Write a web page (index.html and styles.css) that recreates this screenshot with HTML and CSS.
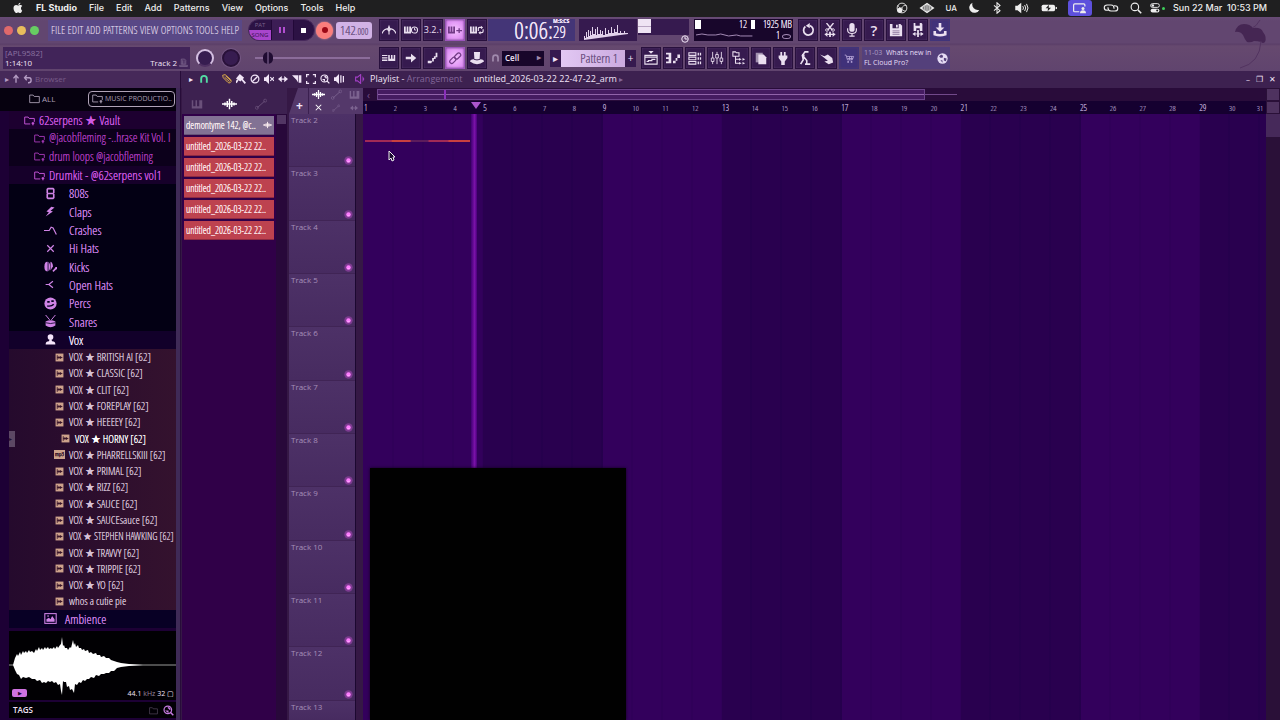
FILE: index.html
```
<!DOCTYPE html>
<html lang="en">
<head>
    <meta charset="UTF-8">
    <meta name="viewport" content="width=device-width, initial-scale=1.0">
    <title>FL Studio</title>
    <link rel="stylesheet" href="styles.css">
</head>
<body>
    <!-- Icon sprite -->
    <svg class="sprite" aria-hidden="true">
        <symbol id="i-apple" viewBox="0 0 16 16"><path d="M11.2 1c.1 1.500-1.200 3-2.800 3C8.300 2.500 9.700 1.200 11.200 1zM13.500 11.500c-.8 1.800-1.700 3.200-2.900 3.200-.9 0-1.200-.6-2.300-.6s-1.500.6-2.300.6C4 14.700 2 10.800 2 8c0-2.600 1.700-4 3.400-4 1.100 0 2 .8 2.700.8.700 0 1.800-.8 3.200-.8.700 0 1.800.3 2.400 1.400-2.500 1.400-2 5 .0 6.100z"/></symbol>
        <symbol id="i-ball" viewBox="0 0 16 16"><g fill="none" stroke="currentColor"><circle cx="8" cy="8" r="6.500" stroke-width="1.200"/><path d="M8 8c1-3 3-4 6-3M8 8c-3 0-5-1-5.500-4M8 8c0 3 2 4 5 4"/></g><circle cx="5" cy="11" r="3.500"/></symbol>
        <symbol id="i-diamond" viewBox="0 0 20 16"><path d="M10 1l10 7-10 7L0 8z"/><path d="M5 6v4M7.500 4.500v7M10 3.500v9M12.500 4.500v7M15 6v4" stroke="#1f1f20"/></symbol>
        <symbol id="i-moon" viewBox="0 0 16 16"><path d="M6 1a7 7 0 1 0 9 9.500A7.500 7.500 0 0 1 6 1z"/></symbol>
        <symbol id="i-bt" viewBox="0 0 16 16"><path d="M4 4.500l8 7L8 15V1l4 3.500-8 7" fill="none" stroke="currentColor" stroke-width="1.400"/></symbol>
        <symbol id="i-volume" viewBox="0 0 20 16"><path d="M1 5h3l5-4v14l-5-4H1z"/><path d="M11 5.500q2 2.500 0 5M13.500 4q3 4 0 8M16 2.500q4 5.500 0 11" fill="none" stroke="currentColor" stroke-width="1.300"/></symbol>
        <symbol id="i-battery" viewBox="0 0 24 16"><rect x="1" y="3" width="20" height="10" rx="2.500"/><path d="M22 6v4l2-1V7z"/><path d="M12 3L7 8.500h3.500L10 13l5-5.500h-3.500z" fill="#1f1f20"/></symbol>
        <symbol id="i-share" viewBox="0 0 20 16"><path d="M9 13H3q-1.500 0-1.500-1.500V4Q1.500 2.500 3 2.500h12q1.500 0 1.500 1.500v2" fill="none" stroke="currentColor" stroke-width="1.600"/><circle cx="14" cy="8.500" r="2"/><path d="M10 15q0-4 4-4t4 4z"/></symbol>
        <symbol id="i-rings" viewBox="0 0 20 16"><g fill="none" stroke="currentColor" stroke-width="1.500"><path d="M14 9V8q0-4-4-4H5Q1 4 1 7.500T5 11h1"/><path d="M6 7v1q0 4 4 4h5q4 0 4-3.500T15 5h-1"/></g></symbol>
        <symbol id="i-search" viewBox="0 0 16 16"><path d="M10.500 10.500L15 15" stroke="currentColor" stroke-width="2"/><circle cx="6.500" cy="6.500" r="5" fill="none" stroke="currentColor" stroke-width="1.500"/></symbol>
        <symbol id="i-control" viewBox="0 0 16 16"><rect x="1" y="1" width="14" height="6" rx="3" fill="none" stroke="currentColor" stroke-width="1.500"/><circle cx="4.500" cy="4" r="2"/><rect x="1" y="9" width="14" height="6" rx="3"/><circle cx="11.500" cy="12" r="1.600" fill="#1f1f20"/></symbol>

        <symbol id="i-metronome" viewBox="0 0 16 16"><path d="M0 12Q2 6.500 8 6.500T16 12M8 6v7" fill="none" stroke="currentColor" stroke-width="1.300"/><path d="M8 2l1.500 4h-3zM5 7l3 3 3-3z"/></symbol>
        <symbol id="i-wait" viewBox="0 0 16 16"><path d="M0 4h2v6h1V4h2v6h1V4h2v8H0z"/><circle cx="12" cy="8" r="3.500" fill="#361a4f" stroke="currentColor" stroke-width="1.200"/><path d="M12 5.500V8h2" stroke="currentColor" fill="none"/></symbol>
        <symbol id="i-keysplus" viewBox="0 0 16 16"><path d="M0 4h2v6h1V4h2v6h1V4h2v8H0zM12 6h1.500v2H16v1.500h-2.500v2H12v-2H9.500V8H12z"/></symbol>
        <symbol id="i-loop" viewBox="0 0 16 16"><path d="M0 4h2v6h1V4h2v6h1V4h2v8H0z"/><path d="M9.500 9V6.500Q9.500 5 11 5h2M15 7v2.500q0 1.500-1.500 1.500h-2" fill="none" stroke="currentColor" stroke-width="1.300"/><path d="M12.500 3l2.500 2-2.500 2zM12 9l-2.500 2 2.500 2z"/></symbol>
        <symbol id="i-keyboard" viewBox="0 0 18 16"><path d="M0 4h7v1.500H0zM0 7h7v1.500H0zM0 10h7v2H0zM8 4h2v5h1.500V4h2v5H15V4h2v8H8z"/></symbol>
        <symbol id="i-arrow" viewBox="0 0 16 16"><path d="M2 6.500h6V3l6 5-6 5V9.500H2z"/></symbol>
        <symbol id="i-slide" viewBox="0 0 16 16"><path d="M2 11h4l1 1-1 2H2zM7 8h2v4H7zM9 6h2v3H9zM11 2h2v5h-2z"/></symbol>
        <symbol id="i-link" viewBox="0 0 16 16"><g fill="none" stroke="currentColor" stroke-width="1.400"><rect x="7" y="3.500" width="8" height="4.500" rx="2.200" transform="rotate(-45 11 5.700)"/><rect x="1.500" y="8.500" width="8" height="4.500" rx="2.200" transform="rotate(-45 5.500 10.700)"/></g></symbol>
        <symbol id="i-hat" viewBox="0 0 16 16"><path d="M4.500 1h7L11 9H5z"/><path d="M0 12q0-2 4-2.500h8q4 .5 4 2.500-4 3-8 3t-8-3z"/><path d="M4.500 9.500q3.500 1.500 7 0" stroke="#361a4f" fill="none"/></symbol>
        <symbol id="i-magnet" viewBox="0 0 16 16"><path d="M3.500 14V7.500a4.500 4.500 0 0 1 9 0V14M2 11.500h3M11 11.500h3" fill="none" stroke="currentColor" stroke-width="3"/></symbol>
        <symbol id="i-playlist" viewBox="0 0 16 16"><path d="M5 0h6L8 3z"/><path d="M1 5h14v10H1zM1 7h14" fill="none" stroke="currentColor" stroke-width="1.300"/><path d="M3 12h2v-1h4V9.500h4" fill="none" stroke="currentColor" stroke-width="1.300"/></symbol>
        <symbol id="i-roll" viewBox="0 0 16 16"><path d="M0 2h6v12H0v-2h3V9H0V7h3V4H0zM8 11h3v3H8zM11 8h2v3h-2zM13 4h3v4h-3z"/></symbol>
        <symbol id="i-rack" viewBox="0 0 16 16"><g fill="none" stroke="currentColor" stroke-width="1.200"><path d="M1 2h8v3H1zM1 7h8v3H1zM1 12h8v3H1z"/><path d="M11 3.500h4M11 8.500h4M11 13.500h4" stroke-width="3" stroke-dasharray="1.500 1"/></g></symbol>
        <symbol id="i-mixer" viewBox="0 0 16 16"><path d="M3 1v14M8 1v14M13 1v14" stroke="currentColor"/><path d="M1.500 8h3v4h-3zM6.500 4h3v4h-3zM11.500 8h3v4h-3z" fill="#361a4f" stroke="currentColor"/></symbol>
        <symbol id="i-tree" viewBox="0 0 16 16"><path d="M1 1h3l1 1h3v4H1zM4 6v8h4M4 9.500h4" fill="none" stroke="currentColor" stroke-width="1.200"/><path d="M8 8l3 1.500L8 11zM12 8l3 1.500-3 1.500zM8 12.500l3 1.500-3 1.500zM12 12.500l3 1.500-3 1.500z"/></symbol>
        <symbol id="i-paste" viewBox="0 0 16 16"><path d="M2 2h8v11H2z" opacity=".6"/><path d="M5 4h6l3 3v8H5z"/></symbol>
        <symbol id="i-plug" viewBox="0 0 16 16"><path d="M5 1h2v4h2V1h2v4h2v3l-3 4v4H6v-4L3 8V5h2z"/></symbol>
        <symbol id="i-digger" viewBox="0 0 16 16"><circle cx="6" cy="5" r="1.500"/><path d="M12 1H8L5 5l1 5-3 5M6 6l4 5v4M8 15h6" fill="none" stroke="currentColor" stroke-width="1.800"/></symbol>
        <symbol id="i-tap" viewBox="0 0 16 16"><path d="M0 4l5 2 4-2 5 4 1 5-5 2-5-3 4-1z"/></symbol>
        <symbol id="i-cart" viewBox="0 0 16 16"><path d="M1 3h2l2 7h7l2-5H4M5 8h8M8 5v5M11 5v5" fill="none" stroke="currentColor" stroke-width="1.200"/><circle cx="6" cy="13" r="1.300"/><circle cx="11" cy="13" r="1.300"/></symbol>
        <symbol id="i-undo" viewBox="0 0 16 16"><path d="M5 4a5.500 5.500 0 1 0 5-1" fill="none" stroke="currentColor" stroke-width="2"/><path d="M10 0v6L5.500 3z"/></symbol>
        <symbol id="i-cut" viewBox="0 0 16 16"><path d="M4 0l6.500 8M12 0L5.500 8M2 13h12" stroke="currentColor" stroke-width="1.500"/><circle cx="4.500" cy="8" r="1.500" fill="none" stroke="currentColor"/><circle cx="11.500" cy="8" r="1.500" fill="none" stroke="currentColor"/><path d="M5 10v6l-3-3zM11 10v6l3-3zM7 10h2v6H7z"/></symbol>
        <symbol id="i-mic" viewBox="0 0 16 16"><rect x="5" y="0" width="6" height="10" rx="3"/><path d="M3 6v2q0 4 5 4t5-4V6M8 12v3M5 15h6" fill="none" stroke="currentColor" stroke-width="1.300"/></symbol>
        <symbol id="i-save" viewBox="0 0 16 16"><path d="M1 1h12l2 2v12H1z"/><path d="M4 1h7v5H4z" fill="#361a4f"/><path d="M8 2h2v3H8z"/><path d="M4 9h8M4 11h8M4 13h8" stroke="#8c759c"/></symbol>
        <symbol id="i-saveas" viewBox="0 0 16 16"><path d="M3 0h9l1 1v8H3z"/><path d="M5 0h5v3H5zM6 6h4v3H6z" fill="#361a4f"/><path d="M7 8h2v8H7zM5 10v5l-3-2.500zM11 10v5l3-2.500z"/><path d="M2 12.500h12" stroke="currentColor"/></symbol>
        <symbol id="i-export" viewBox="0 0 16 16"><path d="M6.500 0h3v5H13L8 10 3 5h3.500z"/><path d="M2 9v4q6 2 12 0V9" fill="none" stroke="currentColor" stroke-width="3"/></symbol>
        <symbol id="i-globe" viewBox="0 0 16 16"><circle cx="8" cy="8" r="7.500"/><path d="M6 2l3 2-1 3H5L3 5zM10 7l4 1-1 4-3-1zM5 10l3 1v3z" fill="#54407b"/></symbol>
        <symbol id="i-clock" viewBox="0 0 16 16"><circle cx="8" cy="8" r="6.500" fill="none" stroke="currentColor" stroke-width="2"/><path d="M8 3v5h5" fill="none" stroke="currentColor" stroke-width="2"/></symbol>

        <symbol id="i-pencil" viewBox="0 0 16 16"><path d="M1 2l4-1 9 8q2 3-1 5-2 1-4-1L2 6zM4 5l8 7M6 3l8 8" fill="none" stroke="currentColor" stroke-width="1.600"/></symbol>
        <symbol id="i-brush" viewBox="0 0 16 16"><path d="M6 0l7 6-6 6-7-5z"/><path d="M9 8l6 7M3 9l-3 5" stroke="currentColor" stroke-width="3"/></symbol>
        <symbol id="i-no" viewBox="0 0 16 16"><path d="M3.500 12.500l9-9" stroke="currentColor" stroke-width="2"/><circle cx="8" cy="8" r="6.200" fill="none" stroke="currentColor" stroke-width="2"/></symbol>
        <symbol id="i-mute" viewBox="0 0 16 16"><path d="M0 5h3l5-5v16l-5-5H0z"/><path d="M10 5l6 6M16 5l-6 6" stroke="currentColor" stroke-width="1.800"/></symbol>
        <symbol id="i-slip" viewBox="0 0 16 16"><path d="M0 8l6-5v4h4V3l6 5-6 5V9H6v4z"/></symbol>
        <symbol id="i-slice" viewBox="0 0 16 16"><path d="M0 2h10v12L7 9zM11 2h4v12h-4z"/></symbol>
        <symbol id="i-select" viewBox="0 0 16 16"><path d="M1 5V1h4M11 1h4v4M15 11v4h-4M5 15H1v-4" fill="none" stroke="currentColor" stroke-width="2"/></symbol>
        <symbol id="i-zoom" viewBox="0 0 16 16"><circle cx="7" cy="7" r="5.500" fill="none" stroke="currentColor" stroke-width="1.800"/><path d="M11 11l4 4M7 4q3 0 3 3" fill="none" stroke="currentColor" stroke-width="2.200"/><path d="M3 8h5v4z"/></symbol>
        <symbol id="i-speaker" viewBox="0 0 16 16"><path d="M0 5h3l5-5v16l-5-5H0zM10 2h2v12h-2zM14 3h2v10h-2z"/></symbol>
        <symbol id="i-horn" viewBox="0 0 16 16"><path d="M1 5h3l5-4v14l-5-4H1z" fill="none" stroke="currentColor" stroke-width="1.800"/><path d="M12 3l3 5-3 5z"/></symbol>
        <symbol id="i-wave" viewBox="0 0 20 16"><path d="M0 8h20M4 6v4M7 4v8M10 1v14M13 4v8M16 6v4" stroke="currentColor" stroke-width="2"/></symbol>
        <symbol id="i-auto" viewBox="0 0 16 16"><path d="M3 13L13 4" stroke="currentColor" stroke-width="1.300"/><circle cx="2.500" cy="13" r="2" fill="none" stroke="currentColor"/><circle cx="13.500" cy="3.500" r="2" fill="none" stroke="currentColor"/></symbol>
        <symbol id="i-keys" viewBox="0 0 16 16"><path d="M1 3h2v8h3V3h2v8h3V3h4v11H1z"/></symbol>
        <symbol id="i-up" viewBox="0 0 16 16"><path d="M8 14V4M4 7l4-5 4 5" fill="none" stroke="currentColor" stroke-width="2.200"/></symbol>
        <symbol id="i-back" viewBox="0 0 16 16"><path d="M3 6h7q3 0 3 4t-4 4H8M6 2L2.500 6 6 10" fill="none" stroke="currentColor" stroke-width="2.200"/></symbol>

        <symbol id="i-folder" viewBox="0 0 16 16"><path d="M1 3h5l1.500 2H15v9H1z" fill="none" stroke="currentColor" stroke-width="1.300"/></symbol>
        <symbol id="i-folderplus" viewBox="0 0 16 16"><path d="M9 13H1V3h5l1.500 2H15v5" fill="none" stroke="currentColor" stroke-width="1.300"/><path d="M11 12h4M13 10v5" stroke="currentColor" stroke-width="1.800"/></symbol>
        <symbol id="i-808" viewBox="0 0 16 16"><path d="M5 2h6l1 1v4l-1 1H5L4 7V3zM5 8h6l1 1v4l-1 1H5l-1-1V9z" fill="none" stroke="currentColor" stroke-width="2"/></symbol>
        <symbol id="i-clap" viewBox="0 0 16 16"><path d="M9 2L3 8l3 1-4 5 9-6-3-1 5-4z"/></symbol>
        <symbol id="i-crash" viewBox="0 0 20 16"><path d="M0 8h8l3-5 3 1 5 10" fill="none" stroke="currentColor" stroke-width="1.800"/></symbol>
        <symbol id="i-cross" viewBox="0 0 16 16"><path d="M4 4l8 8M12 4l-8 8" stroke="currentColor" stroke-width="1.500"/></symbol>
        <symbol id="i-kick" viewBox="0 0 16 16"><ellipse cx="4" cy="8" rx="3.500" ry="6"/><path d="M8 2q3 1 3 6l-3 5z"/><path d="M5 1v14" stroke="#050020"/><path d="M11 14l4-4" stroke="currentColor" stroke-width="2"/><circle cx="15" cy="10" r="1.500"/></symbol>
        <symbol id="i-openhat" viewBox="0 0 16 16"><path d="M2 8h4l5-4M6 8l5 4" fill="none" stroke="currentColor" stroke-width="1.500"/></symbol>
        <symbol id="i-perc" viewBox="0 0 16 16"><circle cx="8" cy="8" r="7.500"/><path d="M4 5h3v2H4zM9 4h3v2H9z" fill="#050020"/><path d="M4 11q5 1 8-2" stroke="#050020" stroke-width="1.800" fill="none"/></symbol>
        <symbol id="i-snare" viewBox="0 0 16 16"><path d="M2 0l5 6M14 0L9 6" stroke="currentColor" stroke-width="1.200"/><path d="M2 8q6-3 12 0v5q-6 4-12 0z"/><path d="M2 9.500q6 2 12 0" stroke="#050020" fill="none"/></symbol>
        <symbol id="i-vox" viewBox="0 0 16 16"><circle cx="8" cy="5" r="3.500"/><path d="M7 8h2l1 2q4 0 4 4H2q0-4 4-4z"/></symbol>
        <symbol id="i-picture" viewBox="0 0 16 16"><rect x="1" y="2" width="14" height="12" fill="none" stroke="currentColor" stroke-width="1.300"/><path d="M3 12V9l3-2 2 2 2-4 3 4v3z"/><circle cx="5" cy="5" r="1"/></symbol>
        <symbol id="i-sample" viewBox="0 0 16 16"><path d="M1 1h14v14H1z"/><path d="M4 4v8M4 8h9M7 5.500v5M10 5.500v5" stroke="#331027" stroke-width="1.600"/></symbol>
        <symbol id="i-knob" viewBox="0 0 16 16"><circle cx="8" cy="8" r="7.500" fill="#b14ac0" opacity=".5"/><circle cx="8" cy="8" r="4" fill="#ff7cff"/><path d="M6 10h4" stroke="#ffd4ff"/></symbol>
        <symbol id="i-robot" viewBox="0 0 16 16"><path d="M4 2h6l2 2v7H4zM1 13h14v2H1zM6 4v7M9 4v7" fill="none" stroke="currentColor" stroke-width="1.500"/></symbol>
    </svg>

    <!-- macOS menu bar -->
    <header class="macbar">
        <nav class="mac-menu">
            <svg class="apple"><use href="#i-apple"/></svg>
            <button class="app-name">FL Studio</button>
            <button>File</button><button>Edit</button><button>Add</button><button>Patterns</button>
            <button>View</button><button>Options</button><button>Tools</button><button>Help</button>
        </nav>
        <div class="mac-status">
            <svg><use href="#i-ball"/></svg>
            <svg class="wide"><use href="#i-diamond"/></svg>
            <span class="ua">UA</span>
            <svg><use href="#i-moon"/></svg>
            <svg><use href="#i-bt"/></svg>
            <svg class="wide"><use href="#i-volume"/></svg>
            <svg class="wide"><use href="#i-battery"/></svg>
            <span class="sharing"><svg class="wide"><use href="#i-share"/></svg></span>
            <svg class="wide"><use href="#i-rings"/></svg>
            <svg><use href="#i-search"/></svg>
            <span class="control"><svg><use href="#i-control"/></svg><i class="cam-dot"></i></span>
            <time>Sun 22 Mar&nbsp; 10:53 PM</time>
        </div>
    </header>

    <!-- Main toolbar -->
    <section class="toolbar">
        <div class="bar-left">
            <div class="row">
                <div class="lights"><i class="red"></i><i class="yellow"></i><i class="green"></i></div>
                <nav class="fl-menu">
                    <button>FILE</button><button>EDIT</button><button>ADD</button><button>PATTERNS</button>
                    <button>VIEW</button><button>OPTIONS</button><button>TOOLS</button><button>HELP</button>
                </nav>
                <div class="transport">
                    <div class="mode"><button>PAT</button><button class="on">SONG</button></div>
                    <button class="pause" aria-label="Pause"><i></i><i></i></button>
                    <button class="stop" aria-label="Stop"><i></i></button>
                </div>
                <button class="record" aria-label="Record"><i></i></button>
                <output class="tempo">142<small>.000</small></output>
            </div>
            <div class="row">
                <div class="hint">
                    <span class="dim">[APL9582]</span>
                    <div><span>1:14:10</span><span>Track 2 <svg><use href="#i-robot"/></svg></span></div>
                </div>
                <button class="dial main-vol" aria-label="Main volume"></button>
                <button class="dial main-pitch" aria-label="Main pitch"></button>
                <input class="pitch-slider" type="range" min="0" max="100" value="8" aria-label="Song position">
            </div>
        </div>

        <div class="bar-mid">
            <div class="row">
                <div class="tools">
                    <button aria-label="Metronome"><svg><use href="#i-metronome"/></svg></button>
                    <button aria-label="Wait for input"><svg><use href="#i-wait"/></svg></button>
                    <button class="count">3.2.<small>1</small></button>
                    <button class="lit" aria-label="Overdub"><svg><use href="#i-keysplus"/></svg></button>
                    <button aria-label="Loop record"><svg><use href="#i-loop"/></svg></button>
                </div>
                <div class="clock"><span class="min">0:06:</span><span class="sec"><small>M:S:CS</small>29</span></div>
                <svg class="scope" viewBox="0 0 58 22" aria-hidden="true"><path d="M5 21v-4h1v2h1v-6h1v5h1v-7h1v6h1v-5h1v4h1v-8h1v7h2v-5h1v6h1v-8h1v7h2v-4h1v4h1v-3h1v4h2v-7h1v6h2v-4h1v3h2v-6h1v6h2v-4h1v3h2v-7h1v8h2v-2h1v2h3v-2h1v2h3v1z"/></svg>
                <div class="peak"><i></i><svg><use href="#i-clock"/></svg></div>
            </div>
            <div class="row">
                <div class="tools">
                    <button aria-label="Typing keyboard"><svg><use href="#i-keyboard"/></svg></button>
                    <button aria-label="Step"><svg><use href="#i-arrow"/></svg></button>
                    <button aria-label="Slide"><svg><use href="#i-slide"/></svg></button>
                    <button class="lit" aria-label="Link"><svg><use href="#i-link"/></svg></button>
                    <button aria-label="Wizard"><svg><use href="#i-hat"/></svg></button>
                </div>
                <svg class="snap-icon"><use href="#i-magnet"/></svg>
                <div class="snap"><select aria-label="Snap"><option>Cell</option></select></div>
                <div class="pattern">
                    <button aria-label="Pattern list">▸</button>
                    <input type="text" value="Pattern 1" aria-label="Pattern name">
                    <button aria-label="Add pattern">+</button>
                </div>
            </div>
        </div>

        <div class="bar-right">
            <div class="row">
                <div class="monitor">
                    <div class="monitor-top"><i></i><span class="cpu">12</span><i class="thin"></i><span class="mem">1925 MB</span></div>
                    <svg class="trace" viewBox="0 0 98 8" aria-hidden="true"><path d="M1 6l6-1 6 1h8l5-1 8 2 8-1 4 1h12" fill="none" stroke="#a48bb5"/></svg>
                    <span class="poly">1 <i></i></span>
                </div>
                <div class="tools">
                    <button aria-label="Undo"><svg><use href="#i-undo"/></svg></button>
                    <button aria-label="Cut"><svg><use href="#i-cut"/></svg></button>
                    <button aria-label="Record audio"><svg><use href="#i-mic"/></svg></button>
                    <button class="help">?</button>
                    <button aria-label="Save"><svg><use href="#i-save"/></svg></button>
                    <button aria-label="Save as"><svg><use href="#i-saveas"/></svg></button>
                    <button class="blue" aria-label="Export"><svg><use href="#i-export"/></svg></button>
                </div>
            </div>
            <div class="row">
                <div class="tools">
                    <button aria-label="Playlist"><svg><use href="#i-playlist"/></svg></button>
                    <button aria-label="Piano roll"><svg><use href="#i-roll"/></svg></button>
                    <button aria-label="Channel rack"><svg><use href="#i-rack"/></svg></button>
                    <button aria-label="Mixer"><svg><use href="#i-mixer"/></svg></button>
                    <button aria-label="Browser"><svg><use href="#i-tree"/></svg></button>
                    <button aria-label="Project picker"><svg><use href="#i-paste"/></svg></button>
                    <button aria-label="Plugins"><svg><use href="#i-plug"/></svg></button>
                    <button aria-label="Tools"><svg><use href="#i-digger"/></svg></button>
                    <button aria-label="Touch"><svg><use href="#i-tap"/></svg></button>
                    <button class="blue shop" aria-label="Shop"><svg><use href="#i-cart"/></svg></button>
                </div>
                <a class="news" href="#"><span><em>11-03</em>&nbsp; What's new in<br>FL Cloud Pro?</span><svg><use href="#i-globe"/></svg></a>
            </div>
        </div>

        <div class="bar-rest">
            <svg class="fruit" viewBox="0 0 34 52" aria-hidden="true"><path d="M2 13Q4 5 11 5q6 0 9 4 8-1 10 4 4 5 2 10-2 2-4 0-3-1-7-1-3 2-7 1-2-2-4-7-3-4-8-3z" fill="#452653"/><path d="M19 9q4-1 8-8M28 22q-1 22-21 27" fill="none" stroke="#523360"/></svg>
        </div>
    </section>

    <main class="workspace">
        <!-- Browser -->
        <aside class="browser">
            <div class="panel-head browser-head">
                <span class="tri">▸</span>
                <svg><use href="#i-up"/></svg>
                <svg><use href="#i-back"/></svg>
                <span class="dim">Browser</span>
            </div>
            <div class="browser-body">
                <div class="browser-tabs">
                    <button><svg><use href="#i-folder"/></svg>ALL</button>
                    <button class="active"><svg><use href="#i-folderplus"/></svg>MUSIC PRODUCTIO..</button>
                </div>
                <ul class="tree">
                    <li class="root"><svg><use href="#i-folderplus"/></svg>62serpens ★ Vault</li>
                    <li class="folder dark"><svg><use href="#i-folderplus"/></svg>@jacobfleming -..hrase Kit Vol. I</li>
                    <li class="folder dark"><svg><use href="#i-folderplus"/></svg>drum loops @jacobfleming</li>
                    <li class="folder"><svg><use href="#i-folderplus"/></svg>Drumkit - @62serpens vol1</li>
                    <li class="kit"><svg><use href="#i-808"/></svg>808s</li>
                    <li class="kit"><svg><use href="#i-clap"/></svg>Claps</li>
                    <li class="kit"><svg><use href="#i-crash"/></svg>Crashes</li>
                    <li class="kit"><svg><use href="#i-cross"/></svg>Hi Hats</li>
                    <li class="kit"><svg><use href="#i-kick"/></svg>Kicks</li>
                    <li class="kit"><svg><use href="#i-openhat"/></svg>Open Hats</li>
                    <li class="kit"><svg><use href="#i-perc"/></svg>Percs</li>
                    <li class="kit"><svg><use href="#i-snare"/></svg>Snares</li>
                    <li class="kit open"><svg><use href="#i-vox"/></svg>Vox</li>
                    <li class="file"><svg><use href="#i-sample"/></svg>VOX ★ BRITISH AI [62]</li>
                    <li class="file"><svg><use href="#i-sample"/></svg>VOX ★ CLASSIC [62]</li>
                    <li class="file"><svg><use href="#i-sample"/></svg>VOX ★ CLIT [62]</li>
                    <li class="file"><svg><use href="#i-sample"/></svg>VOX ★ FOREPLAY [62]</li>
                    <li class="file"><svg><use href="#i-sample"/></svg>VOX ★ HEEEEY [62]</li>
                    <li class="file selected"><svg><use href="#i-sample"/></svg>VOX ★ HORNY [62]</li>
                    <li class="file"><b class="mp3">mp3</b>VOX ★ PHARRELLSKIII [62]</li>
                    <li class="file"><svg><use href="#i-sample"/></svg>VOX ★ PRIMAL [62]</li>
                    <li class="file"><svg><use href="#i-sample"/></svg>VOX ★ RIZZ [62]</li>
                    <li class="file"><svg><use href="#i-sample"/></svg>VOX ★ SAUCE [62]</li>
                    <li class="file"><svg><use href="#i-sample"/></svg>VOX ★ SAUCEsauce [62]</li>
                    <li class="file long"><svg><use href="#i-sample"/></svg>VOX ★ STEPHEN HAWKING [62]</li>
                    <li class="file"><svg><use href="#i-sample"/></svg>VOX ★ TRAVVY [62]</li>
                    <li class="file"><svg><use href="#i-sample"/></svg>VOX ★ TRIPPIE [62]</li>
                    <li class="file"><svg><use href="#i-sample"/></svg>VOX ★ YO [62]</li>
                    <li class="file"><svg><use href="#i-sample"/></svg>whos a cutie pie</li>
                    <li class="kit ambience"><svg><use href="#i-picture"/></svg>Ambience</li>
                </ul>
                <div class="preview">
                    <svg class="waveform" viewBox="0 0 167 68" preserveAspectRatio="none" aria-hidden="true">
                        <path d="M0 34h167" stroke="#999"/>
                        <path fill="#fff" d="M4 34L6 27 8 23 9 25 11 21 12 24 14 20 15 22 17 20 18 22 20 19 21 21 23 20 25 22 27 18 28 20 30 16 31 19 33 17 34 19 36 16 37 18 39 16 40 18 42 17 43 18 45 16 46 18 48 15 49 17 51 14 52 13 53 6 54 15 55 14 56 17 58 17 59 19 61 16 62 17 64 9 65 14 66 12 67 16 69 14 70 17 72 17 73 19 75 18 76 20 79 19 80 22 82 21 84 23 87 22 88 24 91 24 92 26 95 25 97 27 100 27 102 29 105 30 108 31 112 32 120 33 134 34 120 35 112 36 108 37 105 40 102 40 100 42 97 42 95 43 92 43 90 45 87 44 85 47 82 46 80 48 78 48 76 50 74 49 72 52 70 51 68 54 66 53 65 62 63 58 61 59 60 55 58 56 57 51 55 51 54 50 53 64 52 60 51 53 49 54 47 51 45 52 43 50 41 51 39 50 37 52 35 51 33 52 31 49 28 50 26 48 23 48 20 46 17 47 14 46 12 48 10 44 8 43 6 39z"/>
                    </svg>
                    <button class="play" aria-label="Play sample">▶</button>
                    <span class="rate">44.1 <em>kHz</em> 32 ▢</span>
                </div>
                <div class="tags"><span>TAGS</span><svg class="dim"><use href="#i-folder"/></svg><svg class="find"><use href="#i-zoom"/></svg></div>
                <span class="grip">▸</span>
            </div>
        </aside>

        <!-- Playlist window -->
        <section class="playlist">
            <div class="panel-head playlist-head">
                <span class="tri">▸</span>
                <svg class="green"><use href="#i-magnet"/></svg>
                <div class="head-tools">
                    <svg class="gold"><use href="#i-pencil"/></svg>
                    <svg><use href="#i-brush"/></svg>
                    <svg><use href="#i-no"/></svg>
                    <svg><use href="#i-mute"/></svg>
                    <svg><use href="#i-slip"/></svg>
                    <svg><use href="#i-slice"/></svg>
                    <svg><use href="#i-select"/></svg>
                    <svg><use href="#i-zoom"/></svg>
                    <svg><use href="#i-speaker"/></svg>
                </div>
                <svg class="violet"><use href="#i-horn"/></svg>
                <h1>Playlist - <em>Arrangement</em></h1>
                <span class="project">untitled_2026-03-22 22-47-22_arm <small>▸</small></span>
                <div class="win-buttons">
                    <button aria-label="Minimize">–</button>
                    <button aria-label="Restore">❐</button>
                    <button aria-label="Close">✕</button>
                </div>
            </div>
            <div class="playlist-body">
                <div class="picker">
                    <div class="picker-tabs">
                        <svg><use href="#i-keys"/></svg>
                        <svg class="on"><use href="#i-wave"/></svg>
                        <svg><use href="#i-auto"/></svg>
                    </div>
                    <div class="picker-main">
                        <ul class="clips">
                            <li class="grey"><span>demontyme 142, @c..</span><svg><use href="#i-wave"/></svg></li>
                            <li>untitled_2026-03-22 22..</li>
                            <li>untitled_2026-03-22 22..</li>
                            <li>untitled_2026-03-22 22..</li>
                            <li>untitled_2026-03-22 22..</li>
                            <li>untitled_2026-03-22 22..</li>
                        </ul>
                        <div class="picker-scroll"><i></i></div>
                    </div>
                </div>

                <div class="tracks">
                    <div class="corner">
                        <button class="add" aria-label="Add track">+</button>
                        <div class="filters">
                            <svg class="on"><use href="#i-wave"/></svg><svg><use href="#i-auto"/></svg><svg><use href="#i-keys"/></svg>
                            <svg class="on"><use href="#i-cross"/></svg><svg class="off"><use href="#i-auto"/></svg><svg class="off"><use href="#i-slip"/></svg>
                        </div>
                    </div>
                    <ul class="track-list">
                        <li>Track 2<svg><use href="#i-knob"/></svg></li>
                        <li>Track 3<svg><use href="#i-knob"/></svg></li>
                        <li>Track 4<svg><use href="#i-knob"/></svg></li>
                        <li>Track 5<svg><use href="#i-knob"/></svg></li>
                        <li>Track 6<svg><use href="#i-knob"/></svg></li>
                        <li>Track 7<svg><use href="#i-knob"/></svg></li>
                        <li>Track 8<svg><use href="#i-knob"/></svg></li>
                        <li>Track 9<svg><use href="#i-knob"/></svg></li>
                        <li>Track 10<svg><use href="#i-knob"/></svg></li>
                        <li>Track 11<svg><use href="#i-knob"/></svg></li>
                        <li>Track 12<svg><use href="#i-knob"/></svg></li>
                        <li class="part">Track 13</li>
                    </ul>
                </div>

                <div class="arrange">
                    <div class="overview"><span>‹</span><div class="range"><i></i></div><div class="tail"></div></div>
                    <ol class="ruler">
                        <li class="major">1</li><li>2</li><li>3</li><li>4</li>
                        <li class="major">5</li><li>6</li><li>7</li><li>8</li>
                        <li class="major">9</li><li>10</li><li>11</li><li>12</li>
                        <li class="major">13</li><li>14</li><li>15</li><li>16</li>
                        <li class="major">17</li><li>18</li><li>19</li><li>20</li>
                        <li class="major">21</li><li>22</li><li>23</li><li>24</li>
                        <li class="major">25</li><li>26</li><li>27</li><li>28</li>
                        <li class="major">29</li><li>30</li><li class="part">31</li>
                    </ol>
                    <div class="grid">
                        <i></i><i></i><i></i><i></i><i></i><i></i><i></i><i class="part"></i>
                        <div class="clip"></div>
                        <div class="playhead"></div>
                        <svg class="cursor" viewBox="0 0 8 12" aria-hidden="true"><path d="M1 1v9l2-2 1 3 2-1-1-3h2z" fill="#1a0830" stroke="#eee"/></svg>
                        <div class="overlay"></div>
                    </div>
                </div>
                <div class="v-scroll"><div class="ends"></div><div class="ends"></div><div class="thumb"></div></div>
            </div>
        </section>
    </main>
</body>
</html>
```
FILE: styles.css
```
:root {
    --bar: #624670;
    --well: #361a4f;
    --head: #3d2150;
    --text: #f1e4f7;
    --dim: #8b72a0;
    --pink: #d05ae2;
    --narrow: "Open Sans Condensed Light", "Open Sans Condensed", "Liberation Sans Narrow", "Open Sans", sans-serif;
    --sans: "Open Sans", "Noto Sans", sans-serif;
}

* {
    margin: 0;
    padding: 0;
    box-sizing: border-box;
}

body {
    display: flex;
    flex-direction: column;
    height: 100vh;
    overflow: hidden;
    background: #240038;
    color: var(--text);
    font-family: var(--sans);
    font-size: 10px;
    line-height: 12px;
}

button, input, select {
    border: 0;
    background: none;
    color: inherit;
    font: inherit;
}

ul, ol {
    list-style: none;
}

em {
    font-style: normal;
}

svg {
    display: block;
    flex: none;
    width: 12px;
    height: 12px;
    fill: currentColor;
}

.sprite {
    position: absolute;
    width: 0;
    height: 0;
}

.dim {
    color: var(--dim);
}

.fl-menu,
.tempo,
.clock,
.pattern input,
.monitor,
.tree,
.clips,
.ruler {
    font-family: var(--narrow);
    font-weight: 300;
    text-shadow: 0 0 0 currentColor;
}

/* macOS menu bar */
.macbar {
    display: flex;
    justify-content: space-between;
    align-items: center;
    height: 17px;
    padding: 0 13px 1px 12px;
    background: #1f1f20;
    color: #eee;
    font-family: Inter, sans-serif;
    font-size: 9px;
    font-weight: 500;
}

.mac-menu,
.mac-status {
    display: flex;
    align-items: center;
    gap: 12px;
}

.app-name {
    font-weight: 700;
}

.mac-status {
    gap: 11px;
}

.mac-status .wide {
    width: 16px;
}

.ua {
    font-size: 8px;
}

.sharing {
    padding: 2px 4px;
    border-radius: 3px;
    background: #5d50dc;
}

.control {
    display: flex;
    align-items: center;
    gap: 2px;
    margin: 0 -3px;
}

.control svg {
    width: 10px;
    height: 10px;
}

.cam-dot {
    width: 3px;
    height: 3px;
    border-radius: 50%;
    background: #3ecf5b;
}

/* Toolbar */
.toolbar {
    display: flex;
    height: 54px;
    padding: 2px 3px;
    background: linear-gradient(#684b76, var(--bar) 4px, var(--bar) 26px, #5a3e68 27px, #66496f 29px, #60446e);
}

.bar-left,
.bar-mid,
.bar-right {
    display: flex;
    flex-direction: column;
    gap: 6px;
}

.bar-left {
    width: 376px;
}

.bar-mid {
    width: 312px;
}

.row {
    display: flex;
    align-items: center;
    height: 22px;
}

.lights {
    display: flex;
    gap: 4px;
    width: 45px;
    padding-left: 1px;
}

.lights i {
    width: 9px;
    height: 9px;
    border-radius: 50%;
}

.lights .red { background: #e0696b; }
.lights .yellow { background: #e8bd5c; }
.lights .green { background: #67cc62; }

.fl-menu {
    display: flex;
    justify-content: space-between;
    align-items: center;
    width: 194px;
    height: 21px;
    padding: 0 3px;
    background: #594886;
    font-size: 11px;
}

.transport {
    display: flex;
    width: 67px;
    height: 22px;
    margin-left: 6px;
    border-radius: 12px;
    overflow: hidden;
    background: #2c1244;
    border: 1px solid #47295c;
}

.mode {
    display: flex;
    flex-direction: column;
    width: 22px;
    font-size: 6px;
    line-height: 10px;
    color: #79618b;
}

.mode button {
    flex: 1;
}

.mode .on {
    background: #a945cc;
    color: #35104c;
}

.pause,
.stop {
    display: flex;
    flex: 1;
    justify-content: center;
    align-items: center;
    gap: 2px;
    border-left: 1px solid #220838;
}

.pause {
    background: #3c1d55;
}

.pause i {
    width: 2px;
    height: 6px;
    background: #b14ed0;
}

.stop i {
    width: 5px;
    height: 5px;
    background: #fff;
}

.record {
    display: flex;
    justify-content: center;
    align-items: center;
    width: 17px;
    height: 17px;
    margin-left: 1px;
    border-radius: 50%;
    background: #fb7e7c;
    box-shadow: 0 0 2px #ff9c9c;
}

.record i {
    width: 6px;
    height: 6px;
    border-radius: 50%;
    background: #9c0916;
}

.tempo {
    width: 36px;
    height: 17px;
    margin-left: 3px;
    padding-left: 4px;
    border-radius: 3px;
    background: #d2b2e6;
    color: #6f5384;
    font-size: 13px;
    line-height: 17px;
}

.tempo small {
    font-size: 9px;
}

.hint {
    display: flex;
    flex-direction: column;
    flex: none;
    justify-content: center;
    width: 187px;
    height: 22px;
    padding: 0 2px;
    background: #412459;
    font-size: 8px;
    line-height: 10px;
}

.hint div,
.hint div span {
    display: flex;
    justify-content: space-between;
    gap: 2px;
}

.hint svg {
    width: 9px;
    height: 9px;
    color: #79618b;
}

.dial {
    flex: none;
    width: 18px;
    height: 18px;
    margin-left: 6px;
    border-radius: 50%;
    background: #371c50;
}

.main-vol {
    border: 2px solid #d5c0e2;
    border-bottom-color: #4f3062;
}

.main-pitch {
    margin-left: 8px;
    border: 2px solid #291139;
    box-shadow: 0 0 0 1px #745783;
}

.pitch-slider {
    appearance: none;
    flex: 1;
    min-width: 0;
    height: 12px;
    margin: 0 9px 0 15px;
    background: linear-gradient(#8b6c9a, #8b6c9a) center / 100% 2px no-repeat;
}

.pitch-slider::-webkit-slider-thumb {
    appearance: none;
    width: 10px;
    height: 12px;
    border-radius: 5px;
    background: linear-gradient(90deg, #200c32 4px, #58406a 4px, #58406a 6px, #200c32 6px);
}

.tools {
    display: flex;
    gap: 2px;
}

.tools button {
    display: flex;
    justify-content: center;
    align-items: center;
    width: 20px;
    height: 22px;
    border: 1px solid #28103d;
    background: var(--well);
    box-shadow: inset 0 0 2px #56386c;
    color: #eadff0;
}

.tools svg {
    width: 14px;
    height: 14px;
}

.tools .lit {
    border-color: #9b55bb;
    background: radial-gradient(#f5c3ff, #d67bf0);
    color: #713a86;
}

.tools .blue {
    border-color: #40347a;
    background: #40317a;
}

.tools .shop {
    color: #b7a6d8;
}

.tools .shop svg {
    width: 11px;
    height: 11px;
}

.tools .count {
    align-items: baseline;
    font-size: 9px;
    line-height: 19px;
}

.tools .count small {
    font-size: 6px;
}

.tools .help {
    font-size: 15px;
    font-weight: 600;
}

.clock {
    display: flex;
    justify-content: flex-end;
    width: 87px;
    height: 22px;
    margin-left: 1px;
    padding-right: 4px;
    background: #443577;
    font-size: 24px;
    line-height: 22px;
}

.clock .sec {
    display: flex;
    flex-direction: column;
    width: 18px;
    font-size: 16px;
    line-height: 16px;
}

.clock small {
    font-family: var(--sans);
    font-size: 5px;
    font-weight: 700;
    line-height: 5px;
}

.scope {
    width: 58px;
    height: 22px;
    margin-left: 4px;
    background: var(--well);
    fill: #e2d1eb;
}

.peak {
    display: flex;
    justify-content: space-between;
    width: 51px;
    height: 16px;
    margin-left: 1px;
    align-self: flex-start;
    background: var(--well);
}

.peak i {
    width: 13px;
    height: 15px;
    border-bottom: 1px solid var(--well);
    background: linear-gradient(#efe4f4 7px, #806690 7px, #efe4f4 8px);
}

.peak svg {
    width: 8px;
    height: 8px;
    margin-top: 16px;
}

.snap-icon {
    width: 9px;
    height: 10px;
    margin-left: 4px;
    color: #a18bad;
}

.snap {
    display: flex;
    position: relative;
    margin-left: 2px;
    font-weight: 600;
    font-size: 8px;
}

.snap::after {
    content: "▸";
    position: absolute;
    right: 3px;
    top: 0;
    color: #a18bad;
}

.snap select {
    appearance: none;
    width: 42px;
    height: 15px;
    padding-left: 3px;
    background: #18062a;
}

.pattern {
    display: flex;
    margin-left: 6px;
    height: 17px;
}

.pattern button {
    width: 11px;
    background: var(--well);
}

.pattern input {
    width: 64px;
    padding-right: 7px;
    background: linear-gradient(90deg, #e2c8f3, #cbaae0);
    color: #6f5384;
    font-size: 13px;
    text-align: right;
}

.bar-right .row:last-child {
    margin-left: -50px;
}

.monitor {
    position: relative;
    width: 99px;
    height: 22px;
    margin: 0 5px 0 3px;
    padding: 1px;
    background: #18062b;
    font-size: 10px;
    line-height: 9px;
}

.monitor-top {
    display: flex;
    gap: 4px;
}

.monitor-top i {
    width: 6px;
    height: 9px;
    background: #fff;
}

.monitor-top .thin {
    width: 4px;
}

.monitor-top .cpu {
    flex: 1;
    text-align: right;
}

.monitor-top .mem {
    width: 33px;
    text-align: right;
    white-space: nowrap;
}

.trace {
    width: 97px;
    height: 8px;
}

.poly {
    position: absolute;
    right: 2px;
    bottom: 1px;
}

.poly i {
    display: inline-block;
    width: 9px;
    height: 5px;
    border: 1px solid #a48bb5;
    border-radius: 50%;
}

.news {
    display: flex;
    justify-content: space-between;
    align-items: center;
    width: 88px;
    height: 22px;
    margin-left: 3px;
    padding: 0 2px;
    background: #54407b;
    color: #e5dcf5;
    font-size: 7px;
    line-height: 10px;
    text-decoration: none;
    white-space: nowrap;
}

.news em {
    color: #ab9bc4;
}

.news svg {
    width: 11px;
    height: 11px;
}

.bar-rest {
    flex: 1;
    display: flex;
    justify-content: flex-end;
    padding-right: 10px;
}

.fruit {
    width: 34px;
    height: 52px;
}

/* Workspace */
.workspace {
    display: flex;
    flex: 1;
    min-height: 0;
}

.panel-head {
    display: flex;
    align-items: center;
    height: 17px;
    padding-bottom: 2px;
    background: var(--head);
}

.panel-head svg {
    width: 10px;
    height: 10px;
}

.tri {
    font-size: 8px;
}

.browser {
    display: flex;
    flex-direction: column;
    width: 181px;
    border-right: 1px solid #270c39;
}

.browser-head {
    gap: 2px;
    padding-left: 5px;
    background: #462959;
    font-size: 8px;
    color: #b39bc2;
}

.browser-head .dim {
    color: #775b88;
}

.browser-body {
    position: relative;
    display: flex;
    flex-direction: column;
    flex: 1;
    min-height: 0;
    padding-left: 9px;
    border-right: 4px solid #3f2a57;
    background: #1d0035;
}

.browser-tabs {
    display: flex;
    align-items: center;
    justify-content: space-between;
    height: 23px;
    margin-left: -9px;
    padding: 0 1px 2px 29px;
    background: #06010f;
    color: #a99db2;
    font-size: 8px;
}

.browser-tabs button {
    display: flex;
    align-items: center;
    gap: 2px;
    height: 16px;
    white-space: nowrap;
}

.browser-tabs svg {
    width: 11px;
    height: 11px;
}

.browser-tabs .active {
    width: 87px;
    padding: 0 3px;
    border: 1px solid #b1a3b8;
    border-radius: 4px;
    font-size: 7px;
}

.tree {
    display: flex;
    flex-direction: column;
    flex: 1;
    min-height: 0;
    background: #030014;
}

.tree li {
    display: flex;
    align-items: center;
    flex: 9 1 0;
    min-height: 0;
    overflow: hidden;
    color: var(--pink);
    font-size: 13px;
    white-space: nowrap;
}

.tree .root {
    gap: 4px;
    padding-left: 15px;
    background: #1d0030;
}

.tree svg {
    width: 11px;
    height: 11px;
}

.tree .folder {
    gap: 4px;
    padding-left: 25px;
    background: #16002a;
}

.tree .dark {
    background: #0c001b;
    color: #aa3abc;
    font-size: 12px;
}

.tree .kit {
    gap: 12px;
    padding-left: 35px;
    color: #d083e6;
}

.tree .kit svg {
    width: 13px;
    height: 13px;
}

.tree .open {
    background: #12002a;
    color: #f4e4fa;
}

.tree .ambience {
    gap: 8px;
    background: #080025;
}

.tree .file {
    flex-grow: 8;
    gap: 5px;
    padding-left: 46px;
    background: linear-gradient(90deg, #250a2d, #34122e);
    color: #d6c0d6;
    font-size: 11px;
}

.tree .file svg {
    width: 9px;
    height: 9px;
    color: #cda28b;
}

.tree .long {
    font-size: 10px;
}

.tree .selected {
    padding-left: 52px;
    color: #fff;
}

.mp3 {
    width: 11px;
    height: 9px;
    margin: 0 -1px;
    background: #cda28b;
    color: #331027;
    font-size: 6px;
    font-weight: 700;
    line-height: 8px;
    text-align: center;
}

.preview {
    position: relative;
    height: 69px;
    margin-top: 3px;
    background: #010003;
}

.waveform {
    width: 100%;
    height: 68px;
}

.play {
    position: absolute;
    left: 3px;
    bottom: 3px;
    width: 15px;
    height: 8px;
    border-radius: 2px;
    background: #cf72e0;
    color: #24002f;
    font-size: 5px;
    line-height: 8px;
}

.rate {
    position: absolute;
    right: 2px;
    bottom: 0;
    font-size: 7px;
}

.rate em {
    color: #96869e;
}

.tags {
    display: flex;
    align-items: center;
    gap: 5px;
    height: 16px;
    margin: 2px 0;
    padding: 0 2px 0 4px;
    background: #020005;
    font-size: 8px;
    font-weight: 600;
}

.tags span {
    flex: 1;
}

.tags svg {
    width: 9px;
    height: 9px;
    color: #4f4358;
}

.tags .find {
    width: 11px;
    height: 11px;
    color: #c57ae0;
}

.grip {
    position: absolute;
    left: 9px;
    top: 343px;
    width: 6px;
    height: 16px;
    background: #5c4864;
    color: #24102f;
    font-size: 6px;
    line-height: 16px;
}

/* Playlist window */
.playlist {
    display: flex;
    flex-direction: column;
    flex: 1;
    min-width: 0;
}

.playlist-head {
    padding-left: 8px;
    padding-right: 4px;
}

.playlist-head .green {
    margin: 0 13px 0 6px;
    color: #53dca4;
}

.head-tools {
    display: flex;
    gap: 4px;
}

.playlist-head .gold {
    color: #d9a94b;
}

.playlist-head .violet {
    margin: 0 5px 0 11px;
    color: #a23fc5;
}

.playlist-head h1 {
    font-size: 9px;
    font-weight: 500;
}

.playlist-head h1 em {
    color: #83679a;
}

.project {
    margin-left: 11px;
    font-size: 9px;
    font-weight: 500;
}

.project small {
    color: #83679a;
}

.win-buttons {
    display: flex;
    gap: 6px;
    margin-left: auto;
    font-size: 8px;
}

.playlist-body {
    display: flex;
    flex: 1;
    min-height: 0;
    background: #351845;
}

.picker {
    display: flex;
    flex-direction: column;
    width: 106px;
    padding-left: 1px;
}

.picker-tabs {
    display: flex;
    justify-content: space-between;
    align-items: center;
    height: 26px;
    padding: 6px 20px 0 9px;
    background: var(--head);
    color: #6a507a;
}

.picker-tabs .on {
    width: 15px;
    color: #fff;
}

.picker-main {
    display: flex;
    flex: 1;
}

.clips {
    display: flex;
    flex-direction: column;
    gap: 2px;
    width: 94px;
    padding: 2px;
    background: #300048;
}

.clips li {
    display: flex;
    align-items: center;
    justify-content: space-between;
    height: 19px;
    padding: 0 2px;
    background: #bd424f;
    border-bottom: 1px solid #8d2a42;
    color: #fff2f4;
    font-size: 10px;
    white-space: nowrap;
}

.clips .grey {
    background: #827294;
    border-color: #655477;
}

.clips svg {
    width: 9px;
}

.picker-scroll {
    flex: 1;
    background: #28083a;
}

.picker-scroll i {
    display: block;
    width: 9px;
    height: 9px;
    margin: 1px;
    background: #523664;
}

.tracks {
    display: flex;
    flex-direction: column;
    width: 76px;
    padding-left: 2px;
}

.corner {
    display: flex;
    height: 26px;
    background: #54386a;
    clip-path: polygon(9px 0, 100% 0, 100% 100%, 0 100%);
}

.corner .add {
    width: 20px;
    padding: 10px 0 0 2px;
    border-right: 1px solid #3a1f4f;
    font-size: 12px;
    font-weight: 700;
}

.filters {
    display: grid;
    grid-template-columns: repeat(3, 1fr);
    flex: 1;
    justify-items: center;
    align-items: center;
    color: #7c6390;
}

.filters svg {
    width: 11px;
    height: 11px;
}

.filters .on {
    width: 13px;
    color: #fff;
}

.filters .off {
    width: 8px;
    height: 8px;
}

.track-list {
    display: flex;
    flex-direction: column;
    flex: 1;
    min-height: 0;
    margin-right: 7px;
    border-right: 1px solid #1c0830;
}

.track-list li {
    display: flex;
    justify-content: space-between;
    flex: 100 1 0;
    min-height: 0;
    padding: 0 2px 1px;
    overflow: hidden;
    border-bottom: 1px solid #402455;
    background: linear-gradient(#4d3167, #472b60);
    color: #a68fb9;
    font-size: 8px;
}

.track-list svg {
    width: 9px;
    height: 9px;
    align-self: flex-end;
}

.track-list .part {
    flex-grow: 36;
    border: 0;
}

.arrange {
    display: flex;
    flex-direction: column;
    flex: 1;
    min-width: 0;
}

.overview {
    display: flex;
    align-items: center;
    height: 13px;
    padding-left: 4px;
    background: #290c3a;
    color: #77548a;
}

.overview .range {
    width: 61%;
    height: 11px;
    margin-left: 7px;
    border: 1px solid #6c438b;
    background: linear-gradient(#9163aa, #9163aa) center / 100% 1px no-repeat #451b61;
}

.range i {
    display: block;
    width: 2px;
    height: 100%;
    margin-left: 12%;
    background: #8b31bb;
}

.tail {
    width: 32px;
    height: 1px;
    background: #72498a;
}

.ruler,
.grid {
    position: relative;
    display: flex;
    padding-left: 1px;
}

.ruler {
    height: 13px;
    background: #150030;
    color: #9b86b4;
    font-size: 8px;
    line-height: 13px;
}

.ruler li {
    flex: 10 1 0;
    min-width: 0;
}

.ruler .major {
    color: #b8a1ce;
    font-size: 9px;
}

.ruler .part {
    flex-grow: 3;
    margin-left: -2px;
}

/* Playhead marker on the ruler */
.ruler::after {
    content: "";
    position: absolute;
    left: 12%;
    top: 1px;
    border: 5px solid transparent;
    border-top: 7px solid #ad55cd;
    border-bottom: 0;
}

.grid {
    flex: 1;
    overflow: hidden;
    background: #33005c;
}

.grid > i {
    flex: 40 1 0;
    background: repeating-linear-gradient(90deg, #33005c 0, #33005c 28px, #2d0056 29px, #33005c 30px);
}

.grid > i:nth-child(even) {
    background: repeating-linear-gradient(90deg, #29004f 0, #29004f 28px, #22004b 29px, #29004f 30px);
}

.grid > .part {
    flex-grow: 22;
}

.clip {
    position: absolute;
    left: 2px;
    top: 26px;
    width: 105px;
    height: 2px;
    background: linear-gradient(90deg, #a12a55 25%, #c8403f 26%, #c8403f 43%, #5c1c5c 44%, #5c1c5c 60%, #a12a55 61%, #a12a55 79%, #c8403f 80%);
}

.playhead {
    position: absolute;
    left: 12%;
    top: 0;
    bottom: 0;
    width: 6px;
    background: linear-gradient(90deg, #400072, #7b12a9 60%, #49007a);
}

.cursor {
    position: absolute;
    left: 25px;
    top: 36px;
    width: 8px;
    height: 12px;
}

.overlay {
    position: absolute;
    left: 7px;
    top: 354px;
    bottom: 0;
    width: 256px;
    background: #010101;
    box-shadow: 0 0 3px #13001f;
}

.v-scroll {
    display: flex;
    flex-direction: column;
    width: 14px;
    background: #2a1038;
}

.ends {
    height: 13px;
    border: 1px solid #2a1038;
    background: #4e325f;
}

.thumb {
    height: 23px;
    background: #46295a;
}
```
